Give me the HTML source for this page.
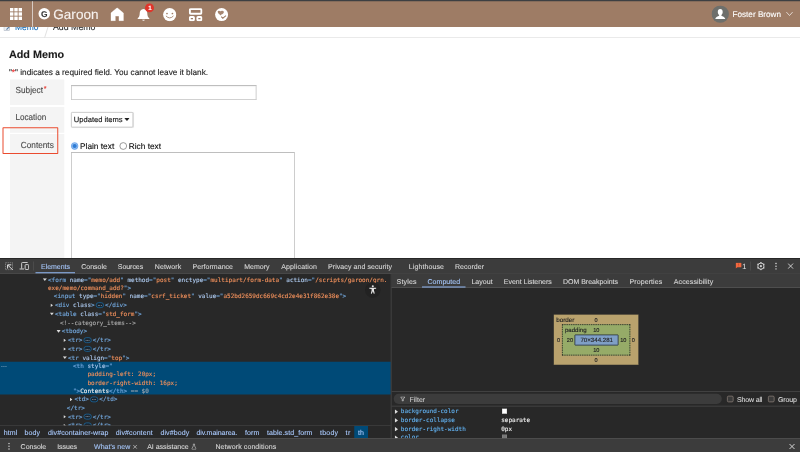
<!DOCTYPE html>
<html lang="en"><head><meta charset="utf-8"><title>Add Memo - Garoon</title>
<style>
html,body{margin:0;padding:0;background:#fff;width:800px;height:452px;overflow:hidden}
#vp{position:absolute;left:0;top:0;width:800px;height:452px;overflow:hidden;background:#fff;will-change:transform}
#s{position:absolute;left:0;top:0;width:3200px;height:1808px;transform:scale(.25);transform-origin:0 0}
#s div,#s span,#s svg,#s a,#s h1,#s p,#s label,#s th,#s button{position:absolute;box-sizing:border-box;margin:0;padding:0}
#s .t{white-space:pre;text-decoration:none;text-rendering:geometricPrecision;font-kerning:none;-webkit-text-stroke:0.45px}
#s .m{-webkit-text-stroke:.5px currentColor}
#s .t span,#s .t b,#s .t i{position:static;font-style:normal;font-weight:inherit}

.dt{color:#c7c7c7}
.tg{color:#74aae0}.an{color:#adc9ee}.av{color:#f0905c}.cm{color:#a8a8a8}.tx{color:#eee}.gy{color:#a0a8b0}
.el{display:inline-block;position:static}
.pn{color:#62b0ee}
</style></head><body><div id="vp"><div id="s">
<div class="page" style="left:0px;top:0px;width:3200px;height:1032px;background:#fff;"></div>
<a class="t" style="left:60px;top:94.14px;font:400 33.83px/33.83px 'Liberation Sans',sans-serif;color:#1d6fb8;transform:scaleY(1.1);transform-origin:0 28.66px;">Memo</a>
<span class="t" style="left:212px;top:93.02px;font:400 35.16px/35.16px 'Liberation Sans',sans-serif;color:#333;transform:scaleY(1.1);transform-origin:0 29.78px;">Add Memo</span>
<svg style="left:172px;top:96px;width:28px;height:56px;" viewBox="0 0 7 14"><path d="M6 0 L1.5 14" stroke="#ccc" stroke-width="0.6" fill="none"/></svg>
<svg style="left:14.4px;top:92px;width:29.6px;height:32px;" viewBox="0 0 7.4 8"><rect x="0.4" y="0.4" width="5.6" height="7" fill="#eceef0" stroke="#a9b4c0" stroke-width=".6"/><path d="M3 6.6 L6.8 2.6" stroke="#5b7fa8" stroke-width="1.1"/></svg>
<div style="left:0px;top:148px;width:3200px;height:3px;background:#e3e3e3;"></div>
<div class="header" style="left:0px;top:0px;width:3200px;height:108px;background:#9e7c65;"></div>
<div style="left:0px;top:0px;width:3200px;height:5px;background:#3d3f42;"></div>
<svg style="left:40px;top:32px;width:48px;height:48px;" viewBox="0 0 12 12"><rect x="0.00" y="0.00" width="3.4" height="3.4" fill="#fff"/><rect x="0.00" y="4.30" width="3.4" height="3.4" fill="#fff"/><rect x="0.00" y="8.60" width="3.4" height="3.4" fill="#fff"/><rect x="4.30" y="0.00" width="3.4" height="3.4" fill="#fff"/><rect x="4.30" y="4.30" width="3.4" height="3.4" fill="#fff"/><rect x="4.30" y="8.60" width="3.4" height="3.4" fill="#fff"/><rect x="8.60" y="0.00" width="3.4" height="3.4" fill="#fff"/><rect x="8.60" y="4.30" width="3.4" height="3.4" fill="#fff"/><rect x="8.60" y="8.60" width="3.4" height="3.4" fill="#fff"/></svg>
<div style="left:128.4px;top:5px;width:3.6px;height:101.6px;background:#d6cbc4;"></div>
<div style="left:153.6px;top:32px;width:46.4px;height:46.4px;background:#fff;border-radius:50%;"></div>
<span class="t" style="left:164.4px;top:38.74px;font:700 33.6px/33.6px 'Liberation Sans',sans-serif;color:#333;">G</span>
<span class="t" style="left:213.2px;top:29.69px;font:400 54.21px/54.21px 'Liberation Sans',sans-serif;color:#f6f1ee;">Garoon</span>
<svg style="left:442px;top:30px;width:56px;height:56px;" viewBox="0 0 14 14"><path d="M6.65 0.3 L12.9 5.5 L12.9 13.2 L8.5 13.2 L8.5 8.6 L4.8 8.6 L4.8 13.2 L0.4 13.2 L0.4 5.5 Z" fill="#fff" stroke="#fff" stroke-width="0.4" stroke-linejoin="round"/></svg>
<svg style="left:546px;top:32px;width:56px;height:56px;" viewBox="0 0 14 14"><path d="M7 1 C4.3 1 3.2 3.2 3.2 5.6 C3.2 8 2.4 9.3 1.2 10.3 L1.2 11 L12.8 11 L12.8 10.3 C11.6 9.3 10.8 8 10.8 5.6 C10.8 3.2 9.7 1 7 1 Z" fill="#fff"/><path d="M5.6 11.8 A1.5 1.5 0 0 0 8.4 11.8 Z" fill="#fff"/></svg>
<div style="left:580.4px;top:14px;width:35.2px;height:35.2px;background:#e0352b;border-radius:50%;"></div>
<span class="t" style="left:592.8px;top:19.39px;font:700 24.8px/24.8px 'Liberation Sans',sans-serif;color:#fff;">1</span>
<svg style="left:652px;top:32px;width:53.6px;height:53.6px;" viewBox="0 0 13.4 13.4"><circle cx="6.7" cy="6.6" r="6.6" fill="#fff"/><circle cx="4" cy="5.5" r="0.85" fill="#9e7c65"/><circle cx="9.4" cy="5.5" r="0.85" fill="#9e7c65"/><path d="M3.2 8.2 Q6.7 11.9 10.2 8.2" stroke="#9e7c65" stroke-width="0.85" fill="none" stroke-linecap="round"/></svg>
<svg style="left:755.2px;top:32.8px;width:55.2px;height:52px;" viewBox="0 0 13.8 13"><rect x="1.1" y="0.8" width="11.6" height="4.6" rx="0.9" fill="none" stroke="#fff" stroke-width="2"/><rect x="1.1" y="8.8" width="4.1" height="3.2" rx="0.7" fill="none" stroke="#fff" stroke-width="1.9"/><rect x="8.6" y="8.8" width="4.1" height="3.2" rx="0.7" fill="none" stroke="#fff" stroke-width="1.9"/></svg>
<svg style="left:860px;top:32px;width:52.8px;height:52.8px;" viewBox="0 0 13.2 13.2"><circle cx="6.6" cy="6.6" r="6.5" fill="#fff"/><path d="M2.7 3.2 Q3.6 2.2 5 3 Q5.6 3.4 6 3 Q7.6 2.2 8.8 3.4 Q9.2 5 7.6 6 L6.4 6.4 L5.6 7.4 L4.6 6.6 Q2.4 5.6 2.7 3.2 Z" fill="#9e7c65" opacity=".92"/><path d="M6.2 8.6 L7.8 10.2 L11 7.6" stroke="#9e7c65" stroke-width="1.05" fill="none"/></svg>
<svg style="left:2846px;top:22px;width:70px;height:70px;" viewBox="0 0 17.5 17.5"><circle cx="8.75" cy="8.6" r="8.7" fill="#6e6f6b"/><path d="M8.75 3.6 C10.4 3.6 11.2 4.9 11.2 6.4 C11.2 7.8 10.6 8.9 9.9 9.5 L9.9 10.3 C11.1 10.9 13.3 11.5 13.8 13.4 L3.7 13.4 C4.2 11.5 6.4 10.9 7.6 10.3 L7.6 9.5 C6.9 8.9 6.3 7.8 6.3 6.4 C6.3 4.9 7.1 3.6 8.75 3.6 Z" fill="#fff"/></svg>
<span class="t" style="left:2930px;top:41.97px;font:400 32.63px/32.63px 'Liberation Sans',sans-serif;color:#fff;">Foster Brown</span>
<svg style="left:3144px;top:46px;width:28px;height:20px;" viewBox="0 0 7 5"><path d="M0.4 0.6 L3.5 4 L6.6 0.6" stroke="#f3ece8" stroke-width="0.8" fill="none"/></svg>
<h1 class="t" style="left:35.6px;top:197.34px;font:700 43.28px/43.28px 'Liberation Sans',sans-serif;color:#1a1a1a;">Add Memo</h1>
<p class="t" style="left:35.6px;top:272.8px;font:400 33.06px/33.06px 'Liberation Sans',sans-serif;color:#222;">"<span style="color:#e33">*</span>" indicates a required field. You cannot leave it blank.</p>
<div style="left:40px;top:318px;width:217.2px;height:102px;background:#f4f4f4;"></div>
<div style="left:40px;top:428px;width:217.2px;height:102.8px;background:#f4f4f4;"></div>
<div style="left:40px;top:536px;width:217.2px;height:500px;background:#f4f4f4;"></div>
<span class="t" style="left:62px;top:341.67px;font:400 32.98px/32.98px 'Liberation Sans',sans-serif;color:#4a4a4a;transform:scaleY(1.08);transform-origin:0 27.93px;">Subject</span>
<span class="t" style="left:174.8px;top:341.21px;font:400 28.8px/28.8px 'Liberation Sans',sans-serif;color:#e8352c;">*</span>
<span class="t" style="left:62px;top:453.29px;font:400 32.48px/32.48px 'Liberation Sans',sans-serif;color:#4a4a4a;transform:scaleY(1.08);transform-origin:0 27.51px;">Location</span>
<span class="t" style="left:83.2px;top:563.27px;font:400 32.98px/32.98px 'Liberation Sans',sans-serif;color:#4a4a4a;transform:scaleY(1.08);transform-origin:0 27.93px;">Contents</span>
<div style="left:284px;top:341.2px;width:742.4px;height:57.6px;background:#fff;border:3px solid #c2c2c2;border-top-color:#a9a9a9;box-shadow:inset 0 3px 4px rgba(0,0,0,.06);"></div>
<div style="left:284px;top:448px;width:248.8px;height:62px;background:#fff;border:3px solid #bcbcbc;border-radius:5px;box-shadow:0 2px 3px rgba(0,0,0,.10);"></div>
<span class="t" style="left:295.2px;top:463.16px;font:400 30.27px/30.27px 'Liberation Sans',sans-serif;color:#111;">Updated items</span>
<svg style="left:496.8px;top:472px;width:21.6px;height:12px;" viewBox="0 0 5.4 3"><path d="M0 0 L5.4 0 L2.7 3 Z" fill="#222"/></svg>
<div style="left:283.6px;top:569.2px;width:29.6px;height:29.6px;background:#9cc3f2;border:3px solid #5b9bea;border-radius:50%;"></div>
<div style="left:290px;top:575.6px;width:16.8px;height:16.8px;background:#2f7dd6;border-radius:50%;"></div>
<label class="t" style="left:320px;top:566.63px;font:400 33.26px/33.26px 'Liberation Sans',sans-serif;color:#111;">Plain text</label>
<div style="left:478px;top:569.2px;width:29.6px;height:29.6px;background:#fff;border:3.5px solid #7a7a7a;border-radius:50%;"></div>
<label class="t" style="left:515.2px;top:566.76px;font:400 33.11px/33.11px 'Liberation Sans',sans-serif;color:#111;">Rich text</label>
<div style="left:284px;top:609.2px;width:894.8px;height:440px;background:#fff;border:3px solid #bdbdbd;border-top-color:#a9a9a9;"></div>
<div style="left:10.4px;top:509.2px;width:222.8px;height:107.2px;border:4.8px solid #ea4b2f;border-radius:3px;"></div>
<div class="devtools" style="left:0px;top:1032px;width:3200px;height:776px;background:#282828;"></div>
<div style="left:0px;top:1032px;width:3200px;height:63.2px;background:#3c3c3c;"></div>
<div style="left:0px;top:1032px;width:3200px;height:3px;background:#202020;"></div>
<div style="left:0px;top:1092px;width:3200px;height:2.4px;background:#585858;"></div>
<svg style="left:20px;top:1048.8px;width:32px;height:32px;" viewBox="0 0 8 8"><rect x="0.4" y="0.4" width="7.2" height="7.2" fill="none" stroke="#9a9a9a" stroke-width="0.75" stroke-dasharray="1.5 0.7"/><path d="M7.6 7.6 L2.9 2.9 M2.6 6.3 L2.6 2.6 L6.3 2.6" stroke="#e4e4e4" stroke-width="1" fill="none"/></svg>
<svg style="left:77.2px;top:1048px;width:40px;height:32.8px;" viewBox="0 0 10 8.2"><path d="M2.4 6.6 L2.4 1.2 Q2.4 0.5 3.1 0.5 L8.4 0.5" stroke="#d4d4d4" stroke-width="0.95" fill="none"/><path d="M0.2 7 L4.8 7" stroke="#d4d4d4" stroke-width="1"/><rect x="5.9" y="2.6" width="3.5" height="4.9" rx="0.7" fill="none" stroke="#d4d4d4" stroke-width="0.95"/></svg>
<div style="left:132.8px;top:1046px;width:2px;height:36px;background:#5a5a5a;"></div>
<span class="t" style="left:164px;top:1053.08px;font:400 28px/28px 'Liberation Sans',sans-serif;color:#a4c4f6;letter-spacing:-0.1px;transform:scaleY(1.0);transform-origin:0 23.72px;">Elements</span>
<span class="t" style="left:324.8px;top:1053.08px;font:400 28px/28px 'Liberation Sans',sans-serif;color:#d5d5d5;letter-spacing:0.08px;transform:scaleY(1.0);transform-origin:0 23.72px;">Console</span>
<span class="t" style="left:471.2px;top:1053.08px;font:400 28px/28px 'Liberation Sans',sans-serif;color:#d5d5d5;letter-spacing:-0.19px;transform:scaleY(1.0);transform-origin:0 23.72px;">Sources</span>
<span class="t" style="left:619.2px;top:1053.08px;font:400 28px/28px 'Liberation Sans',sans-serif;color:#d5d5d5;letter-spacing:0.48px;transform:scaleY(1.0);transform-origin:0 23.72px;">Network</span>
<span class="t" style="left:770px;top:1053.08px;font:400 28px/28px 'Liberation Sans',sans-serif;color:#d5d5d5;letter-spacing:0.17px;transform:scaleY(1.0);transform-origin:0 23.72px;">Performance</span>
<span class="t" style="left:976.8px;top:1053.08px;font:400 28px/28px 'Liberation Sans',sans-serif;color:#d5d5d5;letter-spacing:0.1px;transform:scaleY(1.0);transform-origin:0 23.72px;">Memory</span>
<span class="t" style="left:1124.8px;top:1053.08px;font:400 28px/28px 'Liberation Sans',sans-serif;color:#d5d5d5;letter-spacing:0.62px;transform:scaleY(1.0);transform-origin:0 23.72px;">Application</span>
<span class="t" style="left:1312px;top:1053.08px;font:400 28px/28px 'Liberation Sans',sans-serif;color:#d5d5d5;letter-spacing:0.29px;transform:scaleY(1.0);transform-origin:0 23.72px;">Privacy and security</span>
<span class="t" style="left:1635.2px;top:1053.08px;font:400 28px/28px 'Liberation Sans',sans-serif;color:#d5d5d5;letter-spacing:0.42px;transform:scaleY(1.0);transform-origin:0 23.72px;">Lighthouse</span>
<span class="t" style="left:1820px;top:1053.08px;font:400 28px/28px 'Liberation Sans',sans-serif;color:#d5d5d5;letter-spacing:0.12px;transform:scaleY(1.0);transform-origin:0 23.72px;">Recorder</span>
<div style="left:142.4px;top:1088.8px;width:157.6px;height:4.4px;background:#8fb6f2;"></div>
<svg style="left:2942.4px;top:1050.4px;width:24.8px;height:25.6px;" viewBox="0 0 6.2 6.4"><path d="M0.7 0.2 L5.5 0.2 Q6 0.2 6 0.7 L6 4.2 Q6 4.7 5.5 4.7 L1.9 4.7 L0.2 6 L0.2 0.7 Q0.2 0.2 0.7 0.2 Z" fill="#f2683f"/><rect x="2.85" y="1" width="0.55" height="1.9" fill="#b3401f"/><rect x="2.85" y="3.3" width="0.55" height="0.55" fill="#b3401f"/></svg>
<span class="t" style="left:2969.2px;top:1049.73px;font:400 29.6px/29.6px 'Liberation Sans',sans-serif;color:#dcdcdc;">1</span>
<div style="left:3000px;top:1046px;width:2px;height:36px;background:#5a5a5a;"></div>
<svg style="left:3026.4px;top:1047.2px;width:35.2px;height:35.2px;" viewBox="0 0 8.8 8.8"><circle cx="4.4" cy="4.4" r="3.1" fill="none" stroke="#d0d0d0" stroke-width="1"/><circle cx="4.4" cy="4.4" r="1.1" fill="#d0d0d0"/><g stroke="#d0d0d0" stroke-width="1.3"><path d="M4.4 0.3 L4.4 1.5M4.4 7.3 L4.4 8.5M0.9 2.3 L1.9 2.9M6.9 5.9 L7.9 6.5M0.9 6.5 L1.9 5.9M6.9 2.9 L7.9 2.3"/></g></svg>
<svg style="left:3100px;top:1049.6px;width:8px;height:29.6px;" viewBox="0 0 2 7.4"><circle cx="1" cy="0.9" r="0.8" fill="#d0d0d0"/><circle cx="1" cy="3.7" r="0.8" fill="#d0d0d0"/><circle cx="1" cy="6.5" r="0.8" fill="#d0d0d0"/></svg>
<svg style="left:3150.4px;top:1052px;width:24.8px;height:24.8px;" viewBox="0 0 6.2 6.2"><path d="M0.5 0.5 L5.7 5.7 M5.7 0.5 L0.5 5.7" stroke="#d8d8d8" stroke-width="0.9"/></svg>
<div style="left:0px;top:1447.2px;width:1563.2px;height:131.2px;background:#004a77;"></div>
<span class="t" style="left:192px;top:1105.7px;font:400 23.99px/23.99px 'DejaVu Sans Mono','Liberation Mono',monospace;color:#e3e3e3;"><span class="tg">&lt;form</span><span class="an"> name</span><span class="tg">="</span><span class="av">memo/add</span><span class="tg">"</span><span class="an"> method</span><span class="tg">="</span><span class="av">post</span><span class="tg">"</span><span class="an"> enctype</span><span class="tg">="</span><span class="av">multipart/form-data</span><span class="tg">"</span><span class="an"> action</span><span class="tg">="</span><span class="av">/scripts/garoon/grn.</span></span>
<svg style="left:170.84px;top:1113.08px;width:16.72px;height:11.44px;" viewBox="0 0 3.8 2.6"><path d="M0 0 L3.8 0 L1.9 2.6 Z" fill="#dadada"/></svg>
<span class="t" style="left:192px;top:1140.1px;font:400 23.99px/23.99px 'DejaVu Sans Mono','Liberation Mono',monospace;color:#e3e3e3;"><span class="av">exe/memo/command_add?</span><span class="tg">"&gt;</span></span>
<span class="t" style="left:215.2px;top:1172.9px;font:400 23.99px/23.99px 'DejaVu Sans Mono','Liberation Mono',monospace;color:#e3e3e3;"><span class="tg">&lt;input</span><span class="an"> type</span><span class="tg">="</span><span class="av">hidden</span><span class="tg">"</span><span class="an"> name</span><span class="tg">="</span><span class="av">csrf_ticket</span><span class="tg">"</span><span class="an"> value</span><span class="tg">="</span><span class="av">a52bd2659dc669c4cd2e4e31f862e38e</span><span class="tg">"&gt;</span></span>
<span class="t" style="left:220px;top:1207.7px;font:400 23.99px/23.99px 'DejaVu Sans Mono','Liberation Mono',monospace;color:#e3e3e3;"><span class="tg">&lt;div</span><span class="an"> class</span><span class="tg">&gt;</span></span>
<div style="left:383.24px;top:1208.8px;width:32.4px;height:23.2px;background:#1b2630;border:3px solid #1a6aa3;border-radius:12px;"></div>
<span class="t" style="left:390.24px;top:1207.82px;font:400 18.4px/18.4px 'Liberation Sans',sans-serif;color:#dbe7f3;">…</span>
<span class="t" style="left:420.44px;top:1207.7px;font:400 23.99px/23.99px 'DejaVu Sans Mono','Liberation Mono',monospace;color:#e3e3e3;"><span class="tg">&lt;/div&gt;</span></span>
<svg style="left:201.86px;top:1213.58px;width:9.88px;height:14.44px;" viewBox="0 0 2.6 3.8"><path d="M0 0 L2.6 1.9 L0 3.8 Z" fill="#dadada"/></svg>
<span class="t" style="left:220px;top:1242.9px;font:400 23.99px/23.99px 'DejaVu Sans Mono','Liberation Mono',monospace;color:#e3e3e3;"><span class="tg">&lt;table</span><span class="an"> class</span><span class="tg">="</span><span class="av">std_form</span><span class="tg">"&gt;</span></span>
<svg style="left:198.84px;top:1250.28px;width:16.72px;height:11.44px;" viewBox="0 0 3.8 2.6"><path d="M0 0 L3.8 0 L1.9 2.6 Z" fill="#dadada"/></svg>
<span class="t" style="left:240px;top:1277.7px;font:400 23.99px/23.99px 'DejaVu Sans Mono','Liberation Mono',monospace;color:#e3e3e3;"><span class="cm">&lt;!--category_items--&gt;</span></span>
<span class="t" style="left:247.2px;top:1312.9px;font:400 23.99px/23.99px 'DejaVu Sans Mono','Liberation Mono',monospace;color:#e3e3e3;"><span class="tg">&lt;tbody&gt;</span></span>
<svg style="left:226.04px;top:1320.28px;width:16.72px;height:11.44px;" viewBox="0 0 3.8 2.6"><path d="M0 0 L3.8 0 L1.9 2.6 Z" fill="#dadada"/></svg>
<span class="t" style="left:272px;top:1347.7px;font:400 23.99px/23.99px 'DejaVu Sans Mono','Liberation Mono',monospace;color:#e3e3e3;"><span class="tg">&lt;tr&gt;</span></span>
<div style="left:334.16px;top:1348.8px;width:32.4px;height:23.2px;background:#1b2630;border:3px solid #1a6aa3;border-radius:12px;"></div>
<span class="t" style="left:341.16px;top:1347.82px;font:400 18.4px/18.4px 'Liberation Sans',sans-serif;color:#dbe7f3;">…</span>
<span class="t" style="left:371.36px;top:1347.7px;font:400 23.99px/23.99px 'DejaVu Sans Mono','Liberation Mono',monospace;color:#e3e3e3;"><span class="tg">&lt;/tr&gt;</span></span>
<svg style="left:253.86px;top:1353.58px;width:9.88px;height:14.44px;" viewBox="0 0 2.6 3.8"><path d="M0 0 L2.6 1.9 L0 3.8 Z" fill="#dadada"/></svg>
<span class="t" style="left:272px;top:1382.9px;font:400 23.99px/23.99px 'DejaVu Sans Mono','Liberation Mono',monospace;color:#e3e3e3;"><span class="tg">&lt;tr&gt;</span></span>
<div style="left:334.16px;top:1384px;width:32.4px;height:23.2px;background:#1b2630;border:3px solid #1a6aa3;border-radius:12px;"></div>
<span class="t" style="left:341.16px;top:1383.02px;font:400 18.4px/18.4px 'Liberation Sans',sans-serif;color:#dbe7f3;">…</span>
<span class="t" style="left:371.36px;top:1382.9px;font:400 23.99px/23.99px 'DejaVu Sans Mono','Liberation Mono',monospace;color:#e3e3e3;"><span class="tg">&lt;/tr&gt;</span></span>
<svg style="left:253.86px;top:1388.78px;width:9.88px;height:14.44px;" viewBox="0 0 2.6 3.8"><path d="M0 0 L2.6 1.9 L0 3.8 Z" fill="#dadada"/></svg>
<span class="t" style="left:272px;top:1417.7px;font:400 23.99px/23.99px 'DejaVu Sans Mono','Liberation Mono',monospace;color:#e3e3e3;"><span class="tg">&lt;tr</span><span class="an"> valign</span><span class="tg">="</span><span class="av">top</span><span class="tg">"&gt;</span></span>
<svg style="left:250.84px;top:1425.08px;width:16.72px;height:11.44px;" viewBox="0 0 3.8 2.6"><path d="M0 0 L3.8 0 L1.9 2.6 Z" fill="#dadada"/></svg>
<span class="t" style="left:292px;top:1452.9px;font:400 23.99px/23.99px 'DejaVu Sans Mono','Liberation Mono',monospace;color:#e3e3e3;"><span class="tg">&lt;th</span><span class="an"> style</span><span class="tg">="</span></span>
<span class="t" style="left:350px;top:1485.3px;font:400 23.99px/23.99px 'DejaVu Sans Mono','Liberation Mono',monospace;color:#e3e3e3;"><span class="av">padding-left: 20px;</span></span>
<span class="t" style="left:350px;top:1517.7px;font:400 23.99px/23.99px 'DejaVu Sans Mono','Liberation Mono',monospace;color:#e3e3e3;"><span class="av">border-right-width: 16px;</span></span>
<span class="t" style="left:292px;top:1550.1px;font:400 23.99px/23.99px 'DejaVu Sans Mono','Liberation Mono',monospace;color:#e3e3e3;"><span class="tg">"&gt;</span><span class="tx">Contents</span><span class="tg">&lt;/th&gt;</span><span class="gy"> == </span><span class="gy">$0</span></span>
<span class="t" style="left:298px;top:1584.9px;font:400 23.99px/23.99px 'DejaVu Sans Mono','Liberation Mono',monospace;color:#e3e3e3;"><span class="tg">&lt;td&gt;</span></span>
<div style="left:360.16px;top:1586px;width:32.4px;height:23.2px;background:#1b2630;border:3px solid #1a6aa3;border-radius:12px;"></div>
<span class="t" style="left:367.16px;top:1585.02px;font:400 18.4px/18.4px 'Liberation Sans',sans-serif;color:#dbe7f3;">…</span>
<span class="t" style="left:397.36px;top:1584.9px;font:400 23.99px/23.99px 'DejaVu Sans Mono','Liberation Mono',monospace;color:#e3e3e3;"><span class="tg">&lt;/td&gt;</span></span>
<svg style="left:279.86px;top:1590.78px;width:9.88px;height:14.44px;" viewBox="0 0 2.6 3.8"><path d="M0 0 L2.6 1.9 L0 3.8 Z" fill="#dadada"/></svg>
<span class="t" style="left:267.2px;top:1619.7px;font:400 23.99px/23.99px 'DejaVu Sans Mono','Liberation Mono',monospace;color:#e3e3e3;"><span class="tg">&lt;/tr&gt;</span></span>
<span class="t" style="left:272px;top:1654.1px;font:400 23.99px/23.99px 'DejaVu Sans Mono','Liberation Mono',monospace;color:#e3e3e3;"><span class="tg">&lt;tr&gt;</span></span>
<div style="left:334.16px;top:1655.2px;width:32.4px;height:23.2px;background:#1b2630;border:3px solid #1a6aa3;border-radius:12px;"></div>
<span class="t" style="left:341.16px;top:1654.22px;font:400 18.4px/18.4px 'Liberation Sans',sans-serif;color:#dbe7f3;">…</span>
<span class="t" style="left:371.36px;top:1654.1px;font:400 23.99px/23.99px 'DejaVu Sans Mono','Liberation Mono',monospace;color:#e3e3e3;"><span class="tg">&lt;/tr&gt;</span></span>
<svg style="left:253.86px;top:1659.98px;width:9.88px;height:14.44px;" viewBox="0 0 2.6 3.8"><path d="M0 0 L2.6 1.9 L0 3.8 Z" fill="#dadada"/></svg>
<span class="t" style="left:272px;top:1688.9px;font:400 23.99px/23.99px 'DejaVu Sans Mono','Liberation Mono',monospace;color:#e3e3e3;"><span class="tg">&lt;tr&gt;</span></span>
<div style="left:334.16px;top:1690px;width:32.4px;height:23.2px;background:#1b2630;border:3px solid #1a6aa3;border-radius:12px;"></div>
<span class="t" style="left:341.16px;top:1689.02px;font:400 18.4px/18.4px 'Liberation Sans',sans-serif;color:#dbe7f3;">…</span>
<span class="t" style="left:371.36px;top:1688.9px;font:400 23.99px/23.99px 'DejaVu Sans Mono','Liberation Mono',monospace;color:#e3e3e3;"><span class="tg">&lt;/tr&gt;</span></span>
<svg style="left:253.86px;top:1694.78px;width:9.88px;height:14.44px;" viewBox="0 0 2.6 3.8"><path d="M0 0 L2.6 1.9 L0 3.8 Z" fill="#dadada"/></svg>
<span class="t" style="left:3.2px;top:1446.72px;font:400 25.6px/25.6px 'Liberation Sans',sans-serif;color:#a9c0d4;">…</span>
<div style="left:1460px;top:1129.2px;width:61.6px;height:61.6px;background:#222;border-radius:50%;"></div>
<svg style="left:1475.6px;top:1139.6px;width:30.4px;height:36px;" viewBox="0 0 7 8"><circle cx="3.5" cy="1" r="0.95" fill="#e3e3e3"/><path d="M0.3 2.4 L6.7 2.4 L6.7 3.3 L4.6 3.5 L4.6 5 L5.3 7.8 L4.4 7.9 L3.5 5.6 L2.6 7.9 L1.7 7.8 L2.4 5 L2.4 3.5 L0.3 3.3 Z" fill="#e3e3e3"/></svg>
<div style="left:0px;top:1701.6px;width:1563.2px;height:50.4px;background:#282828;"></div>
<div style="left:0px;top:1701.6px;width:1563.2px;height:2.4px;background:#4a4a4a;"></div>
<div style="left:1416.8px;top:1704px;width:55.2px;height:48px;background:#004a77;"></div>
<span class="t" style="left:15.2px;top:1717.08px;font:400 28px/28px 'Liberation Sans',sans-serif;color:#a8c7fa;letter-spacing:0.23px;transform:scaleY(1.0);transform-origin:0 23.72px;">html</span>
<span class="t" style="left:98.4px;top:1717.08px;font:400 28px/28px 'Liberation Sans',sans-serif;color:#a8c7fa;letter-spacing:0.29px;transform:scaleY(1.0);transform-origin:0 23.72px;">body</span>
<span class="t" style="left:192px;top:1717.08px;font:400 28px/28px 'Liberation Sans',sans-serif;color:#a8c7fa;letter-spacing:0.3px;transform:scaleY(1.0);transform-origin:0 23.72px;">div#container-wrap</span>
<span class="t" style="left:463.2px;top:1717.08px;font:400 28px/28px 'Liberation Sans',sans-serif;color:#a8c7fa;letter-spacing:0.4px;transform:scaleY(1.0);transform-origin:0 23.72px;">div#content</span>
<span class="t" style="left:641.6px;top:1717.08px;font:400 28px/28px 'Liberation Sans',sans-serif;color:#a8c7fa;letter-spacing:0.45px;transform:scaleY(1.0);transform-origin:0 23.72px;">div#body</span>
<span class="t" style="left:785.6px;top:1717.08px;font:400 28px/28px 'Liberation Sans',sans-serif;color:#a8c7fa;letter-spacing:-0.17px;transform:scaleY(1.0);transform-origin:0 23.72px;">div.mainarea.</span>
<span class="t" style="left:980px;top:1717.08px;font:400 28px/28px 'Liberation Sans',sans-serif;color:#a8c7fa;letter-spacing:0.53px;transform:scaleY(1.0);transform-origin:0 23.72px;">form</span>
<span class="t" style="left:1068px;top:1717.08px;font:400 28px/28px 'Liberation Sans',sans-serif;color:#a8c7fa;letter-spacing:0.32px;transform:scaleY(1.0);transform-origin:0 23.72px;">table.std_form</span>
<span class="t" style="left:1280px;top:1717.08px;font:400 28px/28px 'Liberation Sans',sans-serif;color:#a8c7fa;letter-spacing:0.88px;transform:scaleY(1.0);transform-origin:0 23.72px;">tbody</span>
<span class="t" style="left:1382.4px;top:1717.08px;font:400 28px/28px 'Liberation Sans',sans-serif;color:#a8c7fa;letter-spacing:2.1px;transform:scaleY(1.0);transform-origin:0 23.72px;">tr</span>
<span class="t" style="left:1432px;top:1717.08px;font:400 28px/28px 'Liberation Sans',sans-serif;color:#a8c7fa;letter-spacing:0.65px;transform:scaleY(1.0);transform-origin:0 23.72px;">th</span>
<div style="left:1563.2px;top:1096px;width:2.8px;height:656px;background:#4a4a4a;"></div>
<div style="left:1566px;top:1094.4px;width:1634px;height:56px;background:#3c3c3c;"></div>
<div style="left:1566px;top:1149.2px;width:1634px;height:2.4px;background:#585858;"></div>
<span class="t" style="left:1586px;top:1111.48px;font:400 28px/28px 'Liberation Sans',sans-serif;color:#d5d5d5;letter-spacing:0.83px;transform:scaleY(1.0);transform-origin:0 23.72px;">Styles</span>
<span class="t" style="left:1709.6px;top:1111.48px;font:400 28px/28px 'Liberation Sans',sans-serif;color:#a4c4f6;letter-spacing:0.29px;transform:scaleY(1.0);transform-origin:0 23.72px;">Computed</span>
<span class="t" style="left:1885.6px;top:1111.48px;font:400 28px/28px 'Liberation Sans',sans-serif;color:#d5d5d5;letter-spacing:0.15px;transform:scaleY(1.0);transform-origin:0 23.72px;">Layout</span>
<span class="t" style="left:2015.2px;top:1111.48px;font:400 28px/28px 'Liberation Sans',sans-serif;color:#d5d5d5;letter-spacing:-0.07px;transform:scaleY(1.0);transform-origin:0 23.72px;">Event Listeners</span>
<span class="t" style="left:2252px;top:1111.48px;font:400 28px/28px 'Liberation Sans',sans-serif;color:#d5d5d5;letter-spacing:-0.07px;transform:scaleY(1.0);transform-origin:0 23.72px;">DOM Breakpoints</span>
<span class="t" style="left:2518.4px;top:1111.48px;font:400 28px/28px 'Liberation Sans',sans-serif;color:#d5d5d5;letter-spacing:0.31px;transform:scaleY(1.0);transform-origin:0 23.72px;">Properties</span>
<span class="t" style="left:2695.2px;top:1111.48px;font:400 28px/28px 'Liberation Sans',sans-serif;color:#d5d5d5;letter-spacing:0.43px;transform:scaleY(1.0);transform-origin:0 23.72px;">Accessibility</span>
<div style="left:1688px;top:1145.6px;width:174.4px;height:4.4px;background:#8fb6f2;"></div>
<div style="left:2215.2px;top:1258px;width:338.4px;height:202.4px;background:#b9a26d;border:1px solid #2a2a2a;"></div>
<div style="left:2248px;top:1296.8px;width:272.8px;height:125.6px;background:#96ab68;border:3px dashed #1f1f1f;"></div>
<div style="left:2297.6px;top:1337.6px;width:176px;height:44.8px;background:#7f9fc6;border:3px solid #1f2a36;border-radius:3px;"></div>
<span class="t" style="left:2224.8px;top:1266.27px;font:400 25.18px/25.18px 'Liberation Sans',sans-serif;color:#222;">border</span>
<span class="t" style="left:2378.4px;top:1268.63px;font:400 22.4px/22.4px 'Liberation Sans',sans-serif;color:#222;">0</span>
<span class="t" style="left:2260px;top:1307.44px;font:400 24.28px/24.28px 'Liberation Sans',sans-serif;color:#222;">padding</span>
<span class="t" style="left:2372.8px;top:1309.03px;font:400 22.4px/22.4px 'Liberation Sans',sans-serif;color:#222;">10</span>
<span class="t" style="left:2228px;top:1349.03px;font:400 22.4px/22.4px 'Liberation Sans',sans-serif;color:#222;">0</span>
<span class="t" style="left:2267.2px;top:1349.03px;font:400 22.4px/22.4px 'Liberation Sans',sans-serif;color:#222;">20</span>
<span class="t" style="left:2321.6px;top:1347.2px;font:400 24.55px/24.55px 'Liberation Sans',sans-serif;color:#222;">70×344.281</span>
<span class="t" style="left:2480.8px;top:1349.03px;font:400 22.4px/22.4px 'Liberation Sans',sans-serif;color:#222;">10</span>
<span class="t" style="left:2527.2px;top:1349.03px;font:400 22.4px/22.4px 'Liberation Sans',sans-serif;color:#222;">0</span>
<span class="t" style="left:2372.8px;top:1389.83px;font:400 22.4px/22.4px 'Liberation Sans',sans-serif;color:#222;">10</span>
<span class="t" style="left:2378.4px;top:1429.83px;font:400 22.4px/22.4px 'Liberation Sans',sans-serif;color:#222;">0</span>
<div style="left:1566px;top:1564.8px;width:1634px;height:2.8px;background:#4a4a4a;"></div>
<div style="left:1566px;top:1623.2px;width:1634px;height:2.8px;background:#4a4a4a;"></div>
<div style="left:1575.2px;top:1575.2px;width:1312px;height:40.8px;background:#3c3c3c;border-radius:20px;"></div>
<svg style="left:1600.8px;top:1586.4px;width:20px;height:20px;" viewBox="0 0 5 5"><path d="M0.3 0.4 L4.7 0.4 L3 2.6 L3 4.6 L2 4.6 L2 2.6 Z" fill="none" stroke="#d0d0d0" stroke-width="0.7"/></svg>
<span class="t" style="left:1637.6px;top:1583.48px;font:400 28px/28px 'Liberation Sans',sans-serif;color:#c7c7c7;letter-spacing:0.2px;transform:scaleY(1.0);transform-origin:0 23.72px;">Filter</span>
<div style="left:2908px;top:1582.8px;width:26.4px;height:26.4px;background:#3a3a3a;border:3px solid #8a7e76;border-radius:6px;"></div>
<span class="t" style="left:2948px;top:1583.48px;font:400 28px/28px 'Liberation Sans',sans-serif;color:#d5d5d5;letter-spacing:-0.6px;transform:scaleY(1.0);transform-origin:0 23.72px;">Show all</span>
<div style="left:3072px;top:1582.8px;width:26.4px;height:26.4px;background:#3a3a3a;border:3px solid #8a7e76;border-radius:6px;"></div>
<span class="t" style="left:3112px;top:1583.48px;font:400 28px/28px 'Liberation Sans',sans-serif;color:#d5d5d5;letter-spacing:-0.46px;transform:scaleY(1.0);transform-origin:0 23.72px;">Group</span>
<svg style="left:1578.7px;top:1637.3px;width:13px;height:19px;" viewBox="0 0 2.6 3.8"><path d="M0 0 L2.6 1.9 L0 3.8 Z" fill="#dcdcdc"/></svg>
<span class="t" style="left:1603.2px;top:1632.5px;font:400 23.99px/23.99px 'DejaVu Sans Mono','Liberation Mono',monospace;color:#e3e3e3;"><span class="pn">background-color</span></span>
<div style="left:2008px;top:1635.2px;width:20px;height:20px;background:#fff;border:1px solid #999;"></div>
<svg style="left:1578.7px;top:1672.1px;width:13px;height:19px;" viewBox="0 0 2.6 3.8"><path d="M0 0 L2.6 1.9 L0 3.8 Z" fill="#dcdcdc"/></svg>
<span class="t" style="left:1603.2px;top:1667.3px;font:400 23.99px/23.99px 'DejaVu Sans Mono','Liberation Mono',monospace;color:#e3e3e3;"><span class="pn">border-collapse</span></span>
<span class="t" style="left:2004.8px;top:1667.3px;font:400 23.99px/23.99px 'DejaVu Sans Mono','Liberation Mono',monospace;color:#e3e3e3;"><span class="tx">separate</span></span>
<svg style="left:1578.7px;top:1706.5px;width:13px;height:19px;" viewBox="0 0 2.6 3.8"><path d="M0 0 L2.6 1.9 L0 3.8 Z" fill="#dcdcdc"/></svg>
<span class="t" style="left:1603.2px;top:1701.7px;font:400 23.99px/23.99px 'DejaVu Sans Mono','Liberation Mono',monospace;color:#e3e3e3;"><span class="pn">border-right-width</span></span>
<span class="t" style="left:2004.8px;top:1701.7px;font:400 23.99px/23.99px 'DejaVu Sans Mono','Liberation Mono',monospace;color:#e3e3e3;"><span class="tx">0px</span></span>
<svg style="left:1578.7px;top:1740.9px;width:13px;height:19px;" viewBox="0 0 2.6 3.8"><path d="M0 0 L2.6 1.9 L0 3.8 Z" fill="#dcdcdc"/></svg>
<span class="t" style="left:1603.2px;top:1736.1px;font:400 23.99px/23.99px 'DejaVu Sans Mono','Liberation Mono',monospace;color:#e3e3e3;"><span class="pn">color</span></span>
<div style="left:2008px;top:1738.8px;width:20px;height:20px;background:#777;border:1px solid #999;"></div>
<div style="left:0px;top:1752.8px;width:3200px;height:56px;background:#3c3c3c;"></div>
<div style="left:0px;top:1752px;width:3200px;height:2.8px;background:#555;"></div>
<svg style="left:32px;top:1770.4px;width:8px;height:29.6px;" viewBox="0 0 2 7.4"><circle cx="1" cy="0.9" r="0.75" fill="#d0d0d0"/><circle cx="1" cy="3.7" r="0.75" fill="#d0d0d0"/><circle cx="1" cy="6.5" r="0.75" fill="#d0d0d0"/></svg>
<span class="t" style="left:82.4px;top:1773.88px;font:400 28px/28px 'Liberation Sans',sans-serif;color:#d5d5d5;letter-spacing:-0.06px;transform:scaleY(1.0);transform-origin:0 23.72px;">Console</span>
<span class="t" style="left:228.8px;top:1773.88px;font:400 28px/28px 'Liberation Sans',sans-serif;color:#d5d5d5;letter-spacing:-0.34px;transform:scaleY(1.0);transform-origin:0 23.72px;">Issues</span>
<span class="t" style="left:376px;top:1773.88px;font:400 28px/28px 'Liberation Sans',sans-serif;color:#a4c4f6;letter-spacing:0.11px;transform:scaleY(1.0);transform-origin:0 23.72px;">What's new</span>
<svg style="left:531.2px;top:1777.6px;width:18.4px;height:18.4px;" viewBox="0 0 4.6 4.6"><path d="M0.4 0.4 L4.2 4.2 M4.2 0.4 L0.4 4.2" stroke="#d0d0d0" stroke-width="0.7"/></svg>
<span class="t" style="left:588.8px;top:1773.88px;font:400 28px/28px 'Liberation Sans',sans-serif;color:#d5d5d5;letter-spacing:-0.08px;transform:scaleY(1.0);transform-origin:0 23.72px;">AI assistance</span>
<svg style="left:764.8px;top:1774.4px;width:21.6px;height:24.8px;" viewBox="0 0 5.4 6.2"><path d="M1.8 0.4 L3.6 0.4 M2.1 0.4 L2.1 2.4 L0.5 5.4 Q0.4 5.8 0.9 5.8 L4.5 5.8 Q5 5.8 4.9 5.4 L3.3 2.4 L3.3 0.4" stroke="#d0d0d0" stroke-width="0.6" fill="none"/></svg>
<span class="t" style="left:861.6px;top:1773.88px;font:400 28px/28px 'Liberation Sans',sans-serif;color:#d5d5d5;letter-spacing:0.39px;transform:scaleY(1.0);transform-origin:0 23.72px;">Network conditions</span>
<svg style="left:3156px;top:1773.6px;width:24px;height:24px;" viewBox="0 0 6 6"><path d="M0.5 0.5 L5.5 5.5 M5.5 0.5 L0.5 5.5" stroke="#e0e0e0" stroke-width="0.9"/></svg>
</div></div></body></html>
